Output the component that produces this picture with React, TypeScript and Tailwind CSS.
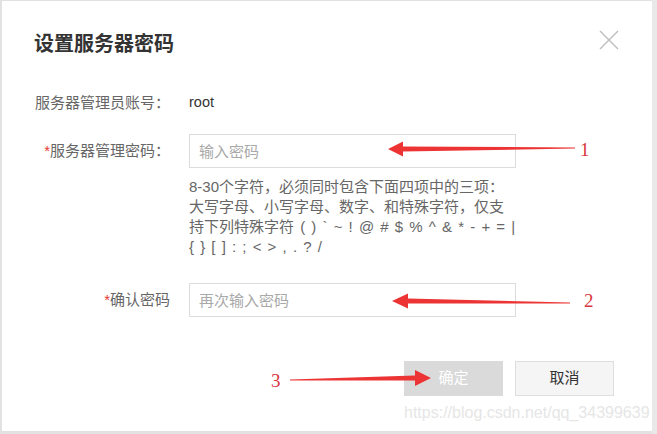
import React from 'react';

const font = "font-['Liberation_Sans','Noto_Sans_CJK_SC',sans-serif]";

function Arrow({ tail, tip, back, half, shaft }: { tail: [number, number]; tip: [number, number]; back: number; half: number; shaft: number }) {
  const [tx, ty] = tail;
  const [px, py] = tip;
  const pts = [
    [tx, ty - 0.6],
    [back, py - shaft],
    [back, py - half],
    [px, py],
    [back, py + half],
    [back, py + shaft],
    [tx, ty + 0.6],
  ];
  return <polygon points={pts.map((p) => p.join(',')).join(' ')} fill="#ec3434" />;
}

export default function App() {
  return (
    <div className={`relative w-[657px] h-[434px] bg-[#e2e2e2] pl-[2px] pt-[1px] overflow-hidden ${font}`}>
      <div className="w-[650px] h-[430px] bg-white flex flex-col">
        {/* header */}
        <div className="flex items-start justify-between pl-[32px] pr-[33px] pt-[29px]">
          <h1 className="text-[20px] leading-[28px] font-bold text-[#333]">设置服务器密码</h1>
          <svg width="20" height="20" viewBox="0 0 20 20" className="text-[#bdbdbd]">
            <path d="M1 1 L19 19 M19 1 L1 19" stroke="currentColor" strokeWidth="1.4" fill="none" />
          </svg>
        </div>

        {/* form */}
        <div className="grid grid-cols-[168px_327px] gap-x-[19px] text-[15px] text-[#666] mt-[28px]">
          <div className="h-[34px] flex items-center justify-end">服务器管理员账号：</div>
          <div className="h-[34px] flex items-center text-[#333] text-[14.5px]">root</div>

          <div className="h-[34px] flex items-center justify-end mt-[14px]">
            <span className="text-[#e53935]">*</span>服务器管理密码：
          </div>
          <input
            className="h-[34px] mt-[14px] border border-[#dcdcdc] pl-[9px] text-[15px] outline-none placeholder:text-[#a9a9a9]"
            placeholder="输入密码"
          />

          <div />
          <div className="mt-[9px] leading-[20px] whitespace-nowrap [word-spacing:2px]">
            8-30个字符，必须同时包含下面四项中的三项：
            <br />
            大写字母、小写字母、数字、和特殊字符，仅支
            <br />
            持下列特殊字符 ( ) ` ~ ! @ # $ % ^ &amp; * - + = |
            <br />
            {'{ } [ ] : ; < > , . ? /'}
          </div>

          <div className="h-[34px] flex items-center justify-end mt-[26px]">
            <span className="text-[#e53935]">*</span>确认密码
          </div>
          <input
            className="h-[34px] mt-[26px] border border-[#dcdcdc] pl-[9px] text-[15px] outline-none placeholder:text-[#a9a9a9]"
            placeholder="再次输入密码"
          />
        </div>

        {/* footer */}
        <div className="flex justify-end gap-[12px] pr-[38px] mt-[44px] text-[15px]">
          <button className="w-[99px] h-[35px] bg-[#dadada] text-white">确定</button>
          <button className="w-[99px] h-[35px] bg-[#f5f5f5] border border-[#dedede] text-[#333]">取消</button>
        </div>
      </div>

      {/* right-side shadow */}
      <div className="absolute top-0 right-0 w-[5px] h-full bg-[#e9e9e9]" />

      {/* annotations */}
      <svg className="absolute inset-0 pointer-events-none" width="657" height="434">
        <Arrow tail={[575, 148]} tip={[388, 149]} back={403} half={7.5} shaft={2.4} />
        <Arrow tail={[570, 303]} tip={[392, 301]} back={408} half={7.5} shaft={2.4} />
        <Arrow tail={[290, 380]} tip={[431, 378]} back={415} half={8} shaft={2.4} />
      </svg>
      <span className="absolute left-[580px] top-[139px] text-[19px] leading-[22px] text-[#d9363e] font-['Liberation_Serif',serif]">1</span>
      <span className="absolute left-[584px] top-[290px] text-[19px] leading-[22px] text-[#d9363e] font-['Liberation_Serif',serif]">2</span>
      <span className="absolute left-[271px] top-[370px] text-[19px] leading-[22px] text-[#d9363e] font-['Liberation_Serif',serif]">3</span>
      <span className="absolute left-[404px] top-[404px] text-[16px] leading-[18px] text-[#e6e6e6] font-['Liberation_Sans',sans-serif]">
        https://blog.csdn.net/qq_34399639
      </span>
    </div>
  );
}
